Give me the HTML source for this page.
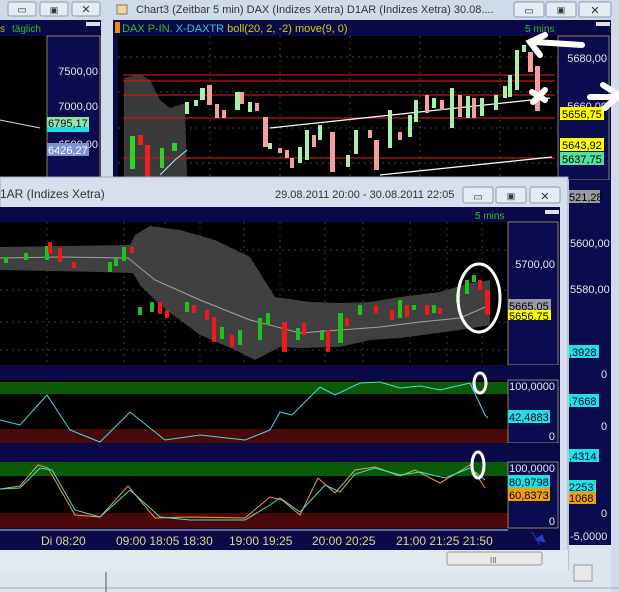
<!DOCTYPE html>
<html><head><meta charset="utf-8"><style>
html,body{margin:0;padding:0;background:#d4dde8;}
svg{display:block;font-family:"Liberation Sans",sans-serif;}
</style></head><body>
<svg width="619" height="592" viewBox="0 0 619 592" xmlns="http://www.w3.org/2000/svg">
<rect width="619" height="592" fill="#d9e2ec"/>
<!-- left window -->
<rect x="0" y="0" width="103" height="180" fill="#cfdbe8"/>
<g fill="#e4ebf3" stroke="#8a9bb0"><rect x="8" y="2" width="28" height="14" rx="2"/><rect x="40" y="2" width="28" height="14" rx="2"/><rect x="72" y="2" width="28" height="14" rx="2"/></g>
<text x="22" y="13" font-size="10" text-anchor="middle" fill="#333">▭</text><text x="54" y="13" font-size="9" text-anchor="middle" fill="#333">▣</text><text x="86" y="13" font-size="11" text-anchor="middle" fill="#333">✕</text>
<rect x="0" y="20" width="101" height="160" fill="#0a0a48"/>
<rect x="0" y="36" width="47" height="144" fill="#000"/>
<rect x="47" y="36" width="53" height="144" fill="#0b0b50" stroke="#c8b070" stroke-width="0.7"/>
<text x="0" y="32" font-size="10" fill="#c8c800">s</text><text x="12" y="32" font-size="10" fill="#2fbf2f">täglich</text>
<rect x="86" y="22" width="14" height="4" fill="#e0e0e0"/>
<g font-size="11" fill="#e8e8e8" text-anchor="end"><text x="98" y="75">7500,00</text><text x="98" y="110">7000,00</text><text x="98" y="148">6500,00</text></g>
<rect x="47" y="117" width="42" height="12" fill="#8fe8a0"/><rect x="47" y="127" width="42" height="5" fill="#20e0e0"/>
<text x="48" y="127" font-size="11" fill="#103">6795,17</text>
<rect x="47" y="143" width="42" height="13" fill="#7f8fd0"/><text x="48" y="154" font-size="11" fill="#fff">6426,27</text>
<polyline points="0,120 40,128" stroke="#bfe8bf" fill="none"/>
<!-- Chart3 window -->
<rect x="103" y="0" width="516" height="180" fill="#cfdbe8"/>
<rect x="117" y="5" width="10" height="9" fill="#e8d8a0" stroke="#a07050"/>
<text x="136" y="13" font-size="11" fill="#333">Chart3 (Zeitbar 5 min)  DAX (Indizes Xetra) D1AR (Indizes Xetra) 30.08....</text>
<g fill="#e4ebf3" stroke="#8a9bb0"><rect x="514" y="2" width="30" height="15" rx="2"/><rect x="546" y="2" width="30" height="15" rx="2"/><rect x="579" y="2" width="32" height="15" rx="2"/></g>
<text x="529" y="14" font-size="10" text-anchor="middle" fill="#333">▭</text><text x="561" y="13" font-size="9" text-anchor="middle" fill="#333">▣</text><text x="595" y="14" font-size="11" text-anchor="middle" fill="#333">✕</text>
<rect x="113" y="20" width="498" height="160" fill="#0a0a48"/>
<rect x="115" y="22" width="5" height="11" fill="#f08a00"/>
<text x="122" y="32" font-size="11"><tspan fill="#2fbf2f">DAX P-IN. </tspan><tspan fill="#20d0d0">X-DAXTR </tspan><tspan fill="#d0d000">boll(20, 2, -2) move(9, 0)</tspan></text>
<text x="525" y="32" font-size="10" fill="#2fbf2f">5 mins</text>
<rect x="596" y="22" width="14" height="4" fill="#e0e0e0"/>
<rect x="118" y="36" width="440" height="144" fill="#000"/>
<rect x="558" y="36" width="51" height="144" fill="#0b0b50" stroke="#c8b070" stroke-width="0.7"/>
<g stroke="#444" stroke-dasharray="2,4"><line x1="118" y1="57" x2="558" y2="57"/><line x1="118" y1="92" x2="558" y2="92"/><line x1="118" y1="128" x2="558" y2="128"/><line x1="118" y1="163" x2="558" y2="163"/>
<line x1="210" y1="36" x2="210" y2="180"/><line x1="280" y1="36" x2="280" y2="180"/><line x1="350" y1="36" x2="350" y2="180"/><line x1="420" y1="36" x2="420" y2="180"/><line x1="500" y1="36" x2="500" y2="180"/></g>
<path d="M124,78 L140,74 L150,80 L160,100 L170,108 L185,103 L187,180 L124,180Z" fill="#3a3a3a"/>
<g stroke="#c01818" stroke-width="1.2"><line x1="123" y1="75" x2="555" y2="75"/><line x1="123" y1="81" x2="555" y2="81"/><line x1="123" y1="95" x2="555" y2="95"/><line x1="123" y1="118" x2="555" y2="118"/><line x1="123" y1="158" x2="555" y2="158"/></g>
<g stroke="#fff" stroke-width="1.2"><line x1="270" y1="128" x2="550" y2="98"/><line x1="380" y1="175" x2="552" y2="157"/></g>
<polyline points="160,175 175,160 187,150" stroke="#8fe" fill="none"/>
<g><rect x="130" y="136" width="5" height="33" fill="#30d030"/><rect x="138" y="135" width="5" height="10" fill="#f02020"/><rect x="145" y="145" width="5" height="33" fill="#f02020"/><rect x="160" y="148" width="4" height="20" fill="#30d030"/><rect x="172" y="143" width="5" height="8" fill="#30d030"/>
<g fill="#a8f0a8"><rect x="185" y="102" width="4" height="12"/><rect x="194" y="100" width="4" height="6"/><rect x="200" y="88" width="5" height="12"/><rect x="235" y="92" width="5" height="18"/><rect x="248" y="102" width="4" height="10"/><rect x="268" y="143" width="4" height="6"/><rect x="298" y="147" width="4" height="16"/><rect x="305" y="130" width="4" height="30"/><rect x="318" y="125" width="4" height="15"/><rect x="346" y="155" width="4" height="12"/><rect x="354" y="130" width="4" height="24"/><rect x="388" y="110" width="4" height="38"/><rect x="408" y="115" width="4" height="22"/><rect x="414" y="100" width="4" height="22"/><rect x="432" y="98" width="4" height="10"/><rect x="450" y="88" width="4" height="40"/><rect x="466" y="96" width="4" height="22"/><rect x="480" y="98" width="4" height="18"/><rect x="494" y="95" width="4" height="15"/><rect x="503" y="86" width="4" height="12"/><rect x="508" y="75" width="4" height="22"/><rect x="515" y="50" width="4" height="40"/><rect x="522" y="45" width="4" height="7"/></g>
<g fill="#f0a0a0"><rect x="207" y="85" width="5" height="20"/><rect x="215" y="104" width="4" height="14"/><rect x="222" y="110" width="4" height="8"/><rect x="240" y="92" width="4" height="12"/><rect x="255" y="103" width="4" height="8"/><rect x="263" y="117" width="5" height="30"/><rect x="278" y="148" width="4" height="5"/><rect x="285" y="150" width="4" height="8"/><rect x="290" y="158" width="4" height="10"/><rect x="312" y="135" width="4" height="12"/><rect x="330" y="132" width="5" height="40"/><rect x="368" y="130" width="4" height="8"/><rect x="374" y="140" width="5" height="30"/><rect x="398" y="132" width="4" height="8"/><rect x="425" y="95" width="4" height="18"/><rect x="440" y="100" width="4" height="10"/><rect x="458" y="95" width="4" height="22"/><rect x="472" y="98" width="4" height="20"/><rect x="528" y="52" width="5" height="20"/><rect x="535" y="66" width="5" height="45"/></g></g>
<g font-size="11" fill="#e8e8e8" text-anchor="end"><text x="607" y="62">5680,00</text><text x="607" y="110">5660,00</text></g>
<rect x="560" y="107" width="44" height="13" fill="#ffff00"/><text x="562" y="118" font-size="11" fill="#000">5656,75</text>
<rect x="560" y="138" width="44" height="13" fill="#ffff00"/><text x="562" y="149" font-size="11" fill="#000">5643,92</text>
<rect x="560" y="152" width="44" height="13" fill="#50e0a0"/><text x="562" y="163" font-size="11" fill="#000">5637,75</text>
<!-- annotations -->
<g stroke="#fff" stroke-width="6" fill="none" stroke-linecap="round"><path d="M582,45 L535,42 M545,35 L530,42 L540,55"/><path d="M590,97 L619,97 M603,85 L619,95 L605,108"/><path d="M532,92 L545,100 M545,90 L533,102"/></g>
<!-- right back strip -->
<rect x="569" y="180" width="42" height="380" fill="#0b0b50"/>
<rect x="611" y="180" width="8" height="412" fill="#cfdbe8"/>
<g font-size="11" fill="#e8e8e8"><text x="570" y="247">5600,00</text><text x="570" y="293">5580,00</text><text x="601" y="378">0</text><text x="601" y="430">0</text><text x="601" y="517">0</text><text x="570" y="540">-5,0000</text></g>
<rect x="569" y="190" width="31" height="13" fill="#9a9aa0"/><text x="569" y="201" font-size="11" fill="#000">521,28</text>
<rect x="569" y="345" width="30" height="13" fill="#20e0e0"/><text x="569" y="356" font-size="11" fill="#003">,3928</text>
<rect x="569" y="394" width="30" height="13" fill="#20e0e0"/><text x="569" y="405" font-size="11" fill="#003">,7668</text>
<rect x="569" y="449" width="30" height="13" fill="#20e0e0"/><text x="569" y="460" font-size="11" fill="#003">,4314</text>
<rect x="569" y="480" width="27" height="12" fill="#20e0e0"/><text x="569" y="491" font-size="11" fill="#003">2253</text>
<rect x="569" y="492" width="27" height="12" fill="#f0a000"/><text x="569" y="502" font-size="11" fill="#003">1068</text>
<rect x="569" y="545" width="42" height="47" fill="#dde5ee"/>
<rect x="574" y="565" width="18" height="16" fill="#e8e8e8" stroke="#999"/>
<!-- front window -->
<rect x="0" y="177" width="568" height="393" fill="#d5e0ec" stroke="#9aa8b8"/>
<text x="0" y="198" font-size="12" fill="#333">1AR (Indizes Xetra)</text>
<text x="275" y="198" font-size="11" fill="#333">29.08.2011 20:00 - 30.08.2011 22:05</text>
<g fill="#e4ebf3" stroke="#8a9bb0"><rect x="463" y="187" width="30" height="16" rx="2"/><rect x="496" y="187" width="30" height="16" rx="2"/><rect x="530" y="187" width="30" height="16" rx="2"/></g>
<text x="478" y="200" font-size="10" text-anchor="middle" fill="#333">▭</text><text x="511" y="199" font-size="9" text-anchor="middle" fill="#333">▣</text><text x="545" y="200" font-size="11" text-anchor="middle" fill="#333">✕</text>
<rect x="0" y="207" width="560" height="344" fill="#0a0a48"/>
<text x="475" y="219" font-size="10" fill="#2fbf2f">5 mins</text>
<rect x="545" y="210" width="14" height="4" fill="#e0e0e0"/>
<rect x="0" y="222" width="508" height="143" fill="#000"/>
<rect x="508" y="222" width="50" height="143" fill="#0b0b50" stroke="#c8b070" stroke-width="0.7"/>
<g stroke="#3a3a3a" stroke-dasharray="2,4"><line x1="0" y1="250" x2="508" y2="250"/><line x1="0" y1="290" x2="508" y2="290"/><line x1="0" y1="322" x2="508" y2="322"/><line x1="0" y1="350" x2="508" y2="350"/>
<line x1="47" y1="222" x2="47" y2="528"/><line x1="124" y1="222" x2="124" y2="528"/><line x1="165" y1="222" x2="165" y2="528"/><line x1="200" y1="222" x2="200" y2="528"/><line x1="244" y1="222" x2="244" y2="528"/><line x1="280" y1="222" x2="280" y2="528"/><line x1="325" y1="222" x2="325" y2="528"/><line x1="363" y1="222" x2="363" y2="528"/><line x1="410" y1="222" x2="410" y2="528"/><line x1="447" y1="222" x2="447" y2="528"/><line x1="482" y1="222" x2="482" y2="528"/></g>
<path d="M0,247 L130,245 L135,235 L150,226 L180,230 L215,240 L250,257 L275,297 L310,302 L340,303 L370,302 L400,297 L440,292 L470,283 L490,280 L490,325 L460,330 L430,334 L400,338 L370,340 L340,347 L300,348 L280,347 L255,360 L235,350 L200,335 L180,320 L160,305 L140,285 L133,273 L100,272 L0,270Z" fill="#404040"/>
<polyline points="0,258 60,257 128,258 155,280 200,300 250,320 300,333 340,330 380,327 420,322 460,318 490,305" stroke="#a0a0a0" fill="none"/>
<g fill="#20c020"><rect x="4" y="257" width="4" height="6"/><rect x="24" y="253" width="4" height="7"/><rect x="45" y="246" width="4" height="14"/><rect x="108" y="262" width="4" height="10"/><rect x="114" y="258" width="4" height="8"/><rect x="122" y="247" width="4" height="14"/><rect x="138" y="307" width="4" height="8"/><rect x="150" y="302" width="4" height="10"/><rect x="185" y="302" width="4" height="10"/><rect x="220" y="327" width="4" height="12"/><rect x="238" y="330" width="4" height="15"/><rect x="258" y="318" width="4" height="22"/><rect x="266" y="313" width="4" height="12"/><rect x="296" y="328" width="4" height="12"/><rect x="320" y="330" width="4" height="10"/><rect x="338" y="313" width="5" height="30"/><rect x="358" y="305" width="4" height="10"/><rect x="398" y="300" width="4" height="18"/><rect x="412" y="305" width="4" height="5"/><rect x="432" y="305" width="4" height="8"/><rect x="456" y="293" width="4" height="10"/><rect x="465" y="280" width="4" height="14"/><rect x="472" y="275" width="4" height="7"/></g>
<g fill="#f01818"><rect x="48" y="242" width="4" height="12"/><rect x="58" y="248" width="4" height="14"/><rect x="72" y="262" width="4" height="6"/><rect x="130" y="247" width="4" height="6"/><rect x="158" y="302" width="4" height="12"/><rect x="165" y="310" width="4" height="8"/><rect x="192" y="305" width="4" height="8"/><rect x="205" y="310" width="4" height="10"/><rect x="212" y="317" width="4" height="25"/><rect x="230" y="335" width="4" height="12"/><rect x="282" y="322" width="5" height="30"/><rect x="302" y="323" width="4" height="12"/><rect x="326" y="330" width="4" height="22"/><rect x="345" y="318" width="4" height="8"/><rect x="374" y="305" width="4" height="8"/><rect x="390" y="310" width="4" height="10"/><rect x="405" y="305" width="4" height="12"/><rect x="425" y="305" width="4" height="10"/><rect x="438" y="308" width="4" height="6"/><rect x="478" y="280" width="4" height="10"/><rect x="485" y="290" width="5" height="25"/></g>
<ellipse cx="479" cy="298" rx="21" ry="34" fill="none" stroke="#fff" stroke-width="3"/>
<text x="555" y="268" font-size="11" fill="#e8e8e8" text-anchor="end">5700,00</text>
<rect x="508" y="299" width="43" height="12" fill="#9a9aa0"/><text x="509" y="310" font-size="11" fill="#000">5665,05</text>
<rect x="508" y="310" width="43" height="10" fill="#ffff00"/><text x="509" y="320" font-size="11" fill="#000">5656,75</text>
<rect x="0" y="365" width="560" height="15" fill="#0a0a48"/>
<!-- ind1 -->
<rect x="0" y="380" width="508" height="63" fill="#000"/>
<rect x="0" y="382" width="508" height="12" fill="#0a5a0a"/><rect x="0" y="429" width="508" height="14" fill="#4a0808"/>
<rect x="508" y="380" width="50" height="63" fill="#0b0b50" stroke="#c8b070" stroke-width="0.7"/>
<polyline points="0,420 20,425 47,395 70,430 100,442 130,412 165,440 200,435 245,440 270,430 280,412 292,415 320,387 335,395 360,383 380,382 400,388 420,386 440,390 470,383 485,415 488,418" stroke="#40e0e0" fill="none"/>
<text x="555" y="390" font-size="11" fill="#e8e8e8" text-anchor="end">100,0000</text><text x="555" y="440" font-size="11" fill="#e8e8e8" text-anchor="end">0</text>
<rect x="508" y="410" width="42" height="13" fill="#20e0e0"/><text x="509" y="421" font-size="11" fill="#003">42,4883</text>
<rect x="0" y="443" width="560" height="19" fill="#0a0a48"/>
<!-- ind2 -->
<rect x="0" y="462" width="508" height="66" fill="#000"/>
<rect x="0" y="462" width="508" height="14" fill="#0a5a0a"/><rect x="0" y="513" width="508" height="15" fill="#4a0808"/>
<rect x="508" y="462" width="50" height="66" fill="#0b0b50" stroke="#c8b070" stroke-width="0.7"/>
<polyline points="0,489 20,486 38,465 48,468 75,515 100,517 128,486 155,518 190,517 245,518 270,497 282,500 300,515 318,478 335,493 355,470 375,467 400,476 415,470 440,483 470,465 485,488" stroke="#f0a020" fill="none"/>
<polyline points="0,489 20,488 40,468 52,470 75,510 100,517 130,490 160,517 190,520 245,520 270,505 280,498 300,512 325,485 340,492 355,474 375,468 400,475 420,472 445,478 470,468 485,480" stroke="#40e0e0" fill="none"/>
<text x="555" y="472" font-size="11" fill="#e8e8e8" text-anchor="end">100,0000</text><text x="555" y="525" font-size="11" fill="#e8e8e8" text-anchor="end">0</text>
<rect x="508" y="475" width="42" height="13" fill="#20e0e0"/><text x="509" y="486" font-size="11" fill="#003">80,9798</text>
<rect x="508" y="488" width="42" height="13" fill="#f0a000"/><text x="509" y="499" font-size="11" fill="#003">60,8373</text>
<g stroke="#fff" stroke-width="3" fill="none"><ellipse cx="480" cy="383" rx="6" ry="10"/><ellipse cx="478" cy="465" rx="6" ry="13"/></g>
<!-- time axis -->
<line x1="0" y1="530" x2="508" y2="530" stroke="#ccc"/>
<g font-size="12" fill="#d8d890"><text x="41" y="545">Di  08:20</text><text x="116" y="545">09:00 18:05 18:30</text><text x="229" y="545">19:00 19:25</text><text x="312" y="545">20:00 20:25</text><text x="396" y="545">21:00 21:25 21:50</text></g>
<rect x="0" y="550" width="568" height="20" fill="#e3e9f0"/>
<rect x="447" y="552" width="95" height="13" rx="2" fill="#e8e8e8" stroke="#999"/>
<text x="490" y="563" font-size="8" fill="#666">III</text>
<path d="M532,532 L540,545 M536,540 L542,535 L545,542 Z" stroke="#2040c0" fill="#2040c0"/>
<rect x="0" y="570" width="569" height="22" fill="#dde5ee"/>
<line x1="0" y1="588" x2="619" y2="588" stroke="#aab"/>
<line x1="106" y1="572" x2="106" y2="592" stroke="#555"/>
</svg>
</body></html>
